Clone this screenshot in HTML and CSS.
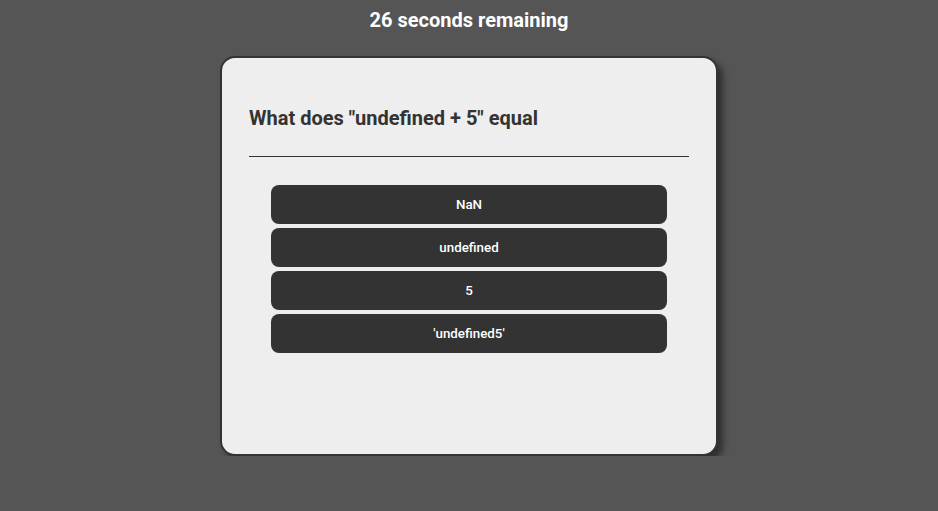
FILE: index.html
```html
<!DOCTYPE html>
<html>
<head>
<meta charset="utf-8">
<link rel="stylesheet" href="styles.css">
</head>
<body>
<h1 class="timer">26 seconds remaining</h1>
<div class="card">
  <h2 class="question">What does "undefined + 5" equal</h2>
  <hr class="divider">
  <div class="answers">
    <button class="answer">NaN</button>
    <button class="answer">undefined</button>
    <button class="answer">5</button>
    <button class="answer">'undefined5'</button>
  </div>
</div>
</body>
</html>
```
FILE: styles.css
```css
html, body {
  margin: 0;
  padding: 0;
  background: #555555;
  font-family: Roboto, "Liberation Sans", sans-serif;
}
body {
  display: flex;
  flex-direction: column;
  align-items: center;
}
.timer {
  margin: 8px 0 0 0;
  height: 48px;
  font-size: 20px;
  line-height: 24px;
  font-weight: 700;
  color: #ffffff;
}
.card {
  box-sizing: border-box;
  width: 498px;
  height: 400px;
  background: #eeeeee;
  border: 2px solid #333333;
  border-radius: 15px;
  box-shadow: 5px 5px 6px rgba(0, 0, 0, 0.45);
  padding: 0 27px;
}
.question {
  margin: 48px 0 0 0;
  font-size: 20px;
  line-height: 24px;
  font-weight: 700;
  color: #333333;
}
.divider {
  margin: 26px 0 0 0;
  border: 0;
  border-top: 1px solid #333333;
  height: 0;
}
.answers {
  margin-top: 28px;
  display: flex;
  flex-direction: column;
  align-items: center;
  gap: 4px;
}
.answer {
  width: 90%;
  height: 39px;
  border: 0;
  border-radius: 8px;
  background: #333333;
  color: #ffffff;
  font-family: Roboto, "Liberation Sans", sans-serif;
  font-size: 13.333px;
  font-weight: 500;
  padding: 0;
}
```
